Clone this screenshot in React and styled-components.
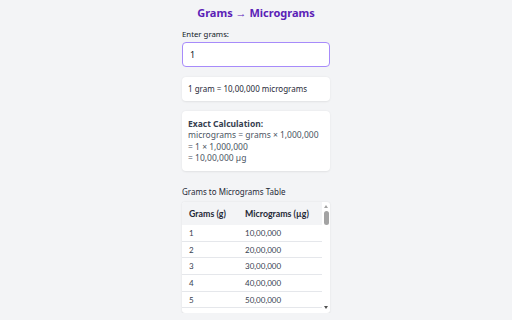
import React from "react";
import styled, { createGlobalStyle } from "styled-components";

const Global = createGlobalStyle`
  html, body { margin: 0; padding: 0; background: #f3f4f6; }
  body { font-family: "Segoe UI", "Noto Sans", "Open Sans", sans-serif; color: #1f2937; }
  * { box-sizing: border-box; }
`;

const Page = styled.div`
  width: 148px;
  margin: 0 auto;
  padding-top: 4px;
  display: flex;
  flex-direction: column;
`;

const Title = styled.h1`
  margin: 0;
  font-size: 11px;
  line-height: 17px;
  font-weight: 700;
  color: #5b21b6;
  text-align: center;
  white-space: nowrap;
`;

const Label = styled.label`
  margin-top: 8px;
  font-size: 7.8px;
  line-height: 11px;
  color: #111827;
`;

const Input = styled.input`
  margin-top: 2px;
  width: 100%;
  height: 25px;
  border: 1.5px solid #a78bfa;
  border-radius: 4px;
  padding: 0 7px;
  font-family: inherit;
  font-size: 9px;
  color: #111827;
  background: #fff;
  outline: none;
`;

const Card = styled.div`
  margin-top: 10px;
  background: #fff;
  border-radius: 4px;
  box-shadow: 0 0.5px 2px rgba(0, 0, 0, 0.08);
  padding: ${(p) => p.$pad || "7px 6px"};
  font-size: ${(p) => p.$fs || 8.5}px;
  line-height: 11.5px;
  color: #1f2937;
`;

const Strong = styled.div`
  font-weight: 700;
  color: #374151;
`;

const Muted = styled.div`
  color: #4b5563;
`;

const SectionLabel = styled.div`
  margin-top: 15px;
  font-size: 8px;
  line-height: 11px;
  color: #1f2937;
`;

const TableWrap = styled.div`
  margin-top: 5px;
  height: 111px;
  display: flex;
  background: #fff;
  border-radius: 3px;
  box-shadow: 0 0.5px 2px rgba(0, 0, 0, 0.1);
  overflow: hidden;
  font-family: "Lato", "Carlito", sans-serif;
`;

const TableArea = styled.div`
  flex: 1;
  overflow: hidden;
`;

const ScrollBar = styled.div`
  width: 8px;
  display: flex;
  flex-direction: column;
  align-items: center;
  padding: 2px 0 2px;
`;

const Arrow = styled.div`
  width: 0;
  height: 0;
  border-left: 2.5px solid transparent;
  border-right: 2.5px solid transparent;
  ${(p) =>
    p.$down
      ? `border-top: 3px solid #505050; margin-top: auto; margin-bottom: 2px;`
      : `border-bottom: 3px solid #a3a3a3; margin-top: 1px;`}
`;

const Thumb = styled.div`
  margin-top: 3px;
  width: 5px;
  height: 14px;
  border-radius: 3px;
  background: #a3a3a3;
`;

const Table = styled.table`
  width: 100%;
  border-collapse: collapse;
  font-size: 8px;
`;

const Th = styled.th`
  text-align: left;
  font-weight: 700;
  font-size: 8.8px;
  background: #f3f4f6;
  color: #1f2937;
  height: 23px;
  padding: 0 0 0 7px;
  width: ${(p) => p.$w || "auto"};
`;

const Td = styled.td`
  height: 16.7px;
  padding: 0 0 0 7px;
  border-bottom: 1px solid #e5e7eb;
  color: #374151;
`;

const fmt = (n) => {
  const s = String(n);
  if (s.length <= 3) return s;
  const last3 = s.slice(-3);
  const rest = s.slice(0, -3).replace(/\B(?=(\d{2})+(?!\d))/g, ",");
  return rest + "," + last3;
};

const rows = [1, 2, 3, 4, 5];

export default function App() {
  return (
    <>
      <Global />
      <Page>
        <Title>Grams → Micrograms</Title>
        <Label>Enter grams:</Label>
        <Input defaultValue="1" />
        <Card $pad="6px 6px" $fs={8}>1 gram = 10,00,000 micrograms</Card>
        <Card $pad="7px 6px">
          <Strong>Exact Calculation:</Strong>
          <Muted>micrograms = grams × 1,000,000</Muted>
          <Muted>= 1 × 1,000,000</Muted>
          <Muted>= 10,00,000 µg</Muted>
        </Card>
        <SectionLabel>Grams to Micrograms Table</SectionLabel>
        <TableWrap>
          <TableArea>
            <Table>
              <thead>
                <tr>
                  <Th $w="56px">Grams (g)</Th>
                  <Th>Micrograms (µg)</Th>
                </tr>
              </thead>
              <tbody>
                {rows.map((r) => (
                  <tr key={r}>
                    <Td>{r}</Td>
                    <Td>{fmt(r * 1000000)}</Td>
                  </tr>
                ))}
              </tbody>
            </Table>
          </TableArea>
          <ScrollBar>
            <Arrow />
            <Thumb />
            <Arrow $down />
          </ScrollBar>
        </TableWrap>
      </Page>
    </>
  );
}
